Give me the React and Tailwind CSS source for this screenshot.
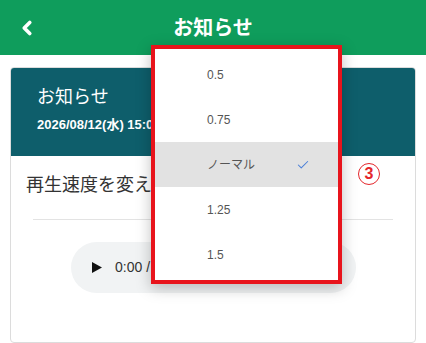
import { Check, ChevronLeft } from "lucide-react";

const speeds = ["0.5", "0.75", "ノーマル", "1.25", "1.5"];

const SpeedMenu = () => (
  <div className="absolute left-[151px] top-[45px] w-[191px] h-[239px] border-[4px] border-[#e8141c] bg-white shadow-[0_4px_14px_rgba(0,0,0,0.25)] pt-[3px]">
    {speeds.map((s) => (
      <div
        key={s}
        className={`h-[45px] flex items-center pl-[52px] pr-[28px] text-[12px] text-[#555] ${
          s === "ノーマル" ? "bg-[#e2e2e2]" : ""
        }`}
      >
        <span className="flex-1">{s}</span>
        {s === "ノーマル" && <Check size={14} strokeWidth={1.8} className="text-[#4a7fd8]" />}
      </div>
    ))}
  </div>
);

export default function App() {
  return (
    <div
      className="relative w-[426px] h-[343px] bg-white overflow-hidden"
      style={{ fontFamily: '"Liberation Sans", "Noto Sans CJK JP", sans-serif' }}
    >
      <header className="h-[55px] bg-[#0f9d5c] flex items-center px-[16px] text-white relative">
        <ChevronLeft size={22} strokeWidth={4} />
        <h1 className="absolute inset-x-0 text-center text-[20px] font-bold leading-none">お知らせ</h1>
      </header>

      <main className="px-[10px] pt-[12px]">
        <div className="border border-[#dcdcdc] rounded-[4px] overflow-hidden h-[276px]">
          <div className="bg-[#0e5e6b] h-[88px] pl-[26px] pt-[16px] text-white">
            <p className="text-[18px] leading-[26px]">お知らせ</p>
            <p className="mt-[5px] text-[13px] font-bold leading-[19px]">2026/08/12(水) 15:00</p>
          </div>
          <div className="px-[15px]">
            <p className="mt-[16px] text-[18px] leading-[26px] text-[#333]">
              再生速度を変えることができます。
            </p>
            <div className="mx-[7px] mt-[21px] border-t border-[#e3e3e3]" />
            <div className="mt-[22px] ml-[45px] w-[285px] h-[51px] rounded-full bg-[#f1f3f4] flex items-center pl-[21px] gap-[13px] text-[14px] text-[#333]">
              <svg width="10" height="11" viewBox="0 0 10 11">
                <path d="M0 0 L10 5.5 L0 11 Z" fill="#111" />
              </svg>
              <span>0:00 / 0:42</span>
            </div>
          </div>
        </div>
      </main>

      <div className="absolute left-[358px] top-[163px] w-[22px] h-[22px] rounded-full border-[1.5px] border-[#e4262b] flex items-center justify-center text-[#e4262b] text-[16px] font-extrabold leading-none">
        3
      </div>

      <SpeedMenu />
    </div>
  );
}
